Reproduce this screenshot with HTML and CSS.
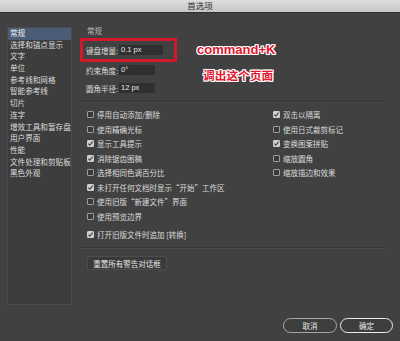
FILE: index.html
```html
<!DOCTYPE html>
<html lang="zh-CN">
<head>
    <meta charset="UTF-8">
    <title>首选项</title>
    <link rel="stylesheet" href="styles.css">
</head>
<body>

<div class="titlebar">首选项</div>

<div class="window">
    <!-- Category list -->
    <ul class="sidebar">
        <li class="active">常规</li>
        <li>选择和锚点显示</li>
        <li>文字</li>
        <li>单位</li>
        <li>参考线和网格</li>
        <li>智能参考线</li>
        <li>切片</li>
        <li>连字</li>
        <li>增效工具和暂存盘</li>
        <li>用户界面</li>
        <li>性能</li>
        <li>文件处理和剪贴板</li>
        <li>黑色外观</li>
    </ul>

    <div class="panel">
        <div class="section-title">常规</div>

        <div class="top">
            <div class="fields">
                <div class="highlight">
                    <div class="field">
                        <span class="label">键盘增量:</span>
                        <span class="value wide">0.1 px</span>
                    </div>
                </div>
                <div class="field plain second">
                    <span class="label">约束角度:</span>
                    <span class="value">0°</span>
                </div>
                <div class="field plain third">
                    <span class="label">圆角半径:</span>
                    <span class="value">12 px</span>
                </div>
            </div>
            <div class="note">
                <div class="note-key">command+K</div>
                <div class="note-text">调出这个页面</div>
            </div>
        </div>

        <div class="divider first"></div>

        <div class="options">
            <div class="col left">
                <div class="check"><span class="box"></span>停用自动添加/删除</div>
                <div class="check"><span class="box"></span>使用精确光标</div>
                <div class="check"><span class="box on"><svg viewBox="0 0 7 7"><path d="M1.3 3.6 L2.9 5.1 L5.7 1.7"/></svg></span>显示工具提示</div>
                <div class="check"><span class="box on"><svg viewBox="0 0 7 7"><path d="M1.3 3.6 L2.9 5.1 L5.7 1.7"/></svg></span>消除锯齿图稿</div>
                <div class="check"><span class="box"></span>选择相同色调百分比</div>
                <div class="check"><span class="box on"><svg viewBox="0 0 7 7"><path d="M1.3 3.6 L2.9 5.1 L5.7 1.7"/></svg></span>未打开任何文档时显示“开始”工作区</div>
                <div class="check"><span class="box"></span>使用旧版“新建文件”界面</div>
                <div class="check"><span class="box"></span>使用预览边界</div>
                <div class="check last"><span class="box on"><svg viewBox="0 0 7 7"><path d="M1.3 3.6 L2.9 5.1 L5.7 1.7"/></svg></span>打开旧版文件时追加 [转换]</div>
            </div>
            <div class="col right">
                <div class="check"><span class="box on"><svg viewBox="0 0 7 7"><path d="M1.3 3.6 L2.9 5.1 L5.7 1.7"/></svg></span>双击以隔离</div>
                <div class="check"><span class="box"></span>使用日式裁剪标记</div>
                <div class="check"><span class="box on"><svg viewBox="0 0 7 7"><path d="M1.3 3.6 L2.9 5.1 L5.7 1.7"/></svg></span>变换图案拼贴</div>
                <div class="check"><span class="box"></span>缩放圆角</div>
                <div class="check"><span class="box"></span>缩放描边和效果</div>
            </div>
        </div>

        <div class="divider second"></div>

        <div class="reset-row">
            <button class="reset">重置所有警告对话框</button>
        </div>
    </div>
</div>

<div class="footer">
    <button class="btn">取消</button>
    <button class="btn primary">确定</button>
</div>

</body>
</html>
```

FILE: styles.css
```css
* {
    box-sizing: border-box;
}
body {
    margin: 0;
    width: 400px;
    height: 341px;
    overflow: hidden;
    background-color: #414141;
    color: #dcdcdc;
    font-family: "Liberation Sans", "Noto Sans CJK SC", sans-serif;
    font-size: 7.5px;
}
.titlebar {
    height: 13px;
    line-height: 12px;
    text-align: center;
    background: linear-gradient(#dedede, #c6c6c6);
    border-bottom: 1px solid #2e2e2e;
    color: #2c2c2c;
    font-size: 8.5px;
}
.window {
    display: flex;
    align-items: flex-start;
    height: 292px;
    padding: 14px 15px 0 7px;
}
.sidebar {
    width: 65px;
    height: 278px;
    margin: 0;
    padding: 0;
    list-style: none;
    background-color: #3d3d3d;
    border: 1px solid #4b4b4b;
    font-size: 7.6px;
}
.sidebar li {
    height: 11.7px;
    line-height: 11.7px;
    padding-left: 2px;
    white-space: nowrap;
}
.sidebar li.active {
    background-color: #4b5c76;
    color: #f2f2f2;
}
.panel {
    flex: 1;
    margin-left: 8px;
}
.section-title {
    height: 11px;
    line-height: 10px;
    padding-left: 7px;
    color: #bcbcbc;
}
.top {
    display: flex;
}
.fields {
    width: 97px;
}
.highlight {
    height: 24px;
    padding-left: 3px;
    border: 3px solid #d2192c;
    display: flex;
    align-items: center;
}
.field {
    display: flex;
    align-items: center;
    height: 10px;
}
.field.plain {
    padding-left: 6px;
}
.field.second {
    margin-top: 3px;
}
.field.third {
    margin-top: 8px;
}
.label {
    width: 33px;
    white-space: nowrap;
}
.value {
    width: 36px;
    height: 10px;
    line-height: 10px;
    padding-left: 2px;
    background-color: #303030;
    color: #e6e6e6;
}
.value.wide {
    width: 44px;
}
.note {
    margin-left: 20px;
    font-weight: bold;
    color: #e3182e;
    text-shadow: 1px 0 #fff, -1px 0 #fff, 0 1px #fff, 0 -1px #fff,
                 1px 1px #fff, -1px -1px #fff, 1px -1px #fff, -1px 1px #fff;
}
.note-key {
    margin-top: 5px;
    font-size: 13px;
    line-height: 14px;
}
.note-text {
    margin-top: 11.5px;
    padding-left: 6px;
    font-size: 11.7px;
    line-height: 14px;
}
.divider {
    height: 2px;
    border-top: 1px solid #373737;
    border-bottom: 1px solid #4a4a4a;
}
.divider.first {
    margin-top: 8px;
}
.divider.second {
    margin-top: 6px;
}
.options {
    display: flex;
    margin-top: 4.5px;
    font-family: "Noto Sans CJK SC", "Liberation Sans", sans-serif;
}
.col.left {
    width: 193px;
    padding-left: 7px;
}
.check {
    display: flex;
    align-items: center;
    height: 14.5px;
    white-space: nowrap;
}
.check.last {
    margin-top: 3.3px;
}
.box {
    width: 7px;
    height: 7px;
    margin-right: 3px;
    flex: none;
    border: 1px solid #9c9c9c;
    border-radius: 1px;
    background-color: #393939;
}
.box.on {
    border-color: #cfcfcf;
    background-color: #cfcfcf;
}
.box svg {
    display: block;
    width: 7px;
    height: 7px;
    margin: -1px;
}
.box svg path {
    fill: none;
    stroke: #4a4a4a;
    stroke-width: 1.2;
}
.reset-row {
    margin-top: 7px;
    padding-left: 7px;
}
button {
    font-family: "Liberation Sans", "Noto Sans CJK SC", sans-serif;
    font-size: 7.5px;
    color: #e6e6e6;
    padding: 0;
}
.reset {
    width: 80px;
    height: 14px;
    background-color: #3a3a3a;
    border: 1px solid #4d4d4d;
    border-radius: 2px;
}
.footer {
    display: flex;
    justify-content: flex-end;
    gap: 3px;
    margin-top: 13px;
    padding-right: 7px;
}
.btn {
    width: 54px;
    height: 15px;
    background-color: #3e3e3e;
    border: 1.5px solid #a6a6a6;
    border-radius: 8px;
}
.btn.primary {
    width: 53px;
    border-color: #ececec;
}
```
